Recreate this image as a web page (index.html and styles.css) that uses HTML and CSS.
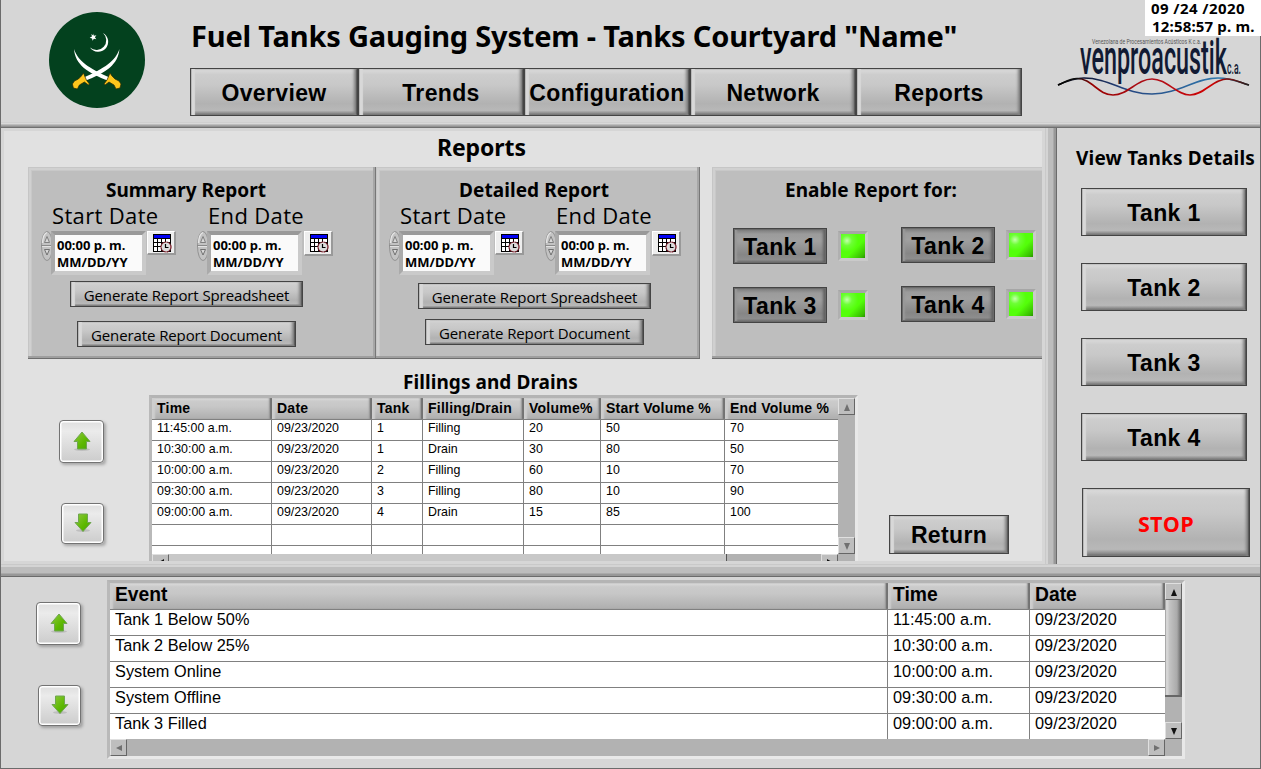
FILE: index.html
```html
<!DOCTYPE html>
<html lang="en">
<head>
<meta charset="utf-8">
<title>Fuel Tanks Gauging System</title>
<link rel="stylesheet" href="styles.css">
</head>
<body>
<svg class="defs" width="0" height="0">
  <defs>
    <linearGradient id="green" x1="0" y1="0" x2="1" y2="1">
      <stop offset="0" stop-color="#8fc93f"/><stop offset=".6" stop-color="#5cb800"/><stop offset="1" stop-color="#4aa010"/>
    </linearGradient>
    <symbol id="up" viewBox="0 0 20 22">
      <ellipse cx="10" cy="18.500" rx="8" ry="1.500" fill="#000" opacity=".12"/>
      <path d="M10 1 L18 10.500 H14.500 V18 H5.500 V10.500 H2 Z" fill="url(#green)" stroke="#6fa650" stroke-width="1"/>
    </symbol>
    <symbol id="down" viewBox="0 0 20 22">
      <ellipse cx="10" cy="17.500" rx="7" ry="1.500" fill="#000" opacity=".12"/>
      <path d="M10 18.500 L18 9.500 H14.500 V1 H5.500 V9.500 H2 Z" fill="url(#green)" stroke="#6fa650" stroke-width="1"/>
    </symbol>
    <symbol id="calendar" viewBox="0 0 19 19">
      <rect width="18" height="18" fill="#000"/>
      <rect x="1" y="1" width="16" height="3" fill="#0000f5"/>
      <g fill="#fff">
        <path d="M1 5h3v3h-3zM5 5h3v3h-3zM9 5h3v3h-3zM13 5h4v3h-4zM1 9h3v3h-3zM5 9h3v3h-3zM9 9h3v3h-3zM13 9h4v3h-4zM1 13h3v4h-3zM5 13h3v4h-3zM9 13h3v4h-3zM13 13h4v4h-4z"/>
      </g>
      <circle cx="13" cy="13" r="5" fill="#dcdcdc" stroke="#7c1522" stroke-width="1.200" stroke-dasharray="2 .6"/>
      <path d="M12.500 10v3.500h3" fill="none" stroke="#000" stroke-width="1.200"/>
    </symbol>
    <symbol id="spin" viewBox="0 0 12 30">
      <ellipse cx="6" cy="15" rx="5.500" ry="14.500" fill="#c3c3c3" stroke="#929292"/>
      <path d="M1.500 12 Q2 3 6 1.500" fill="none" stroke="#e6e6e6" stroke-width="1.300"/>
      <path d="M0 14.500h12" stroke="#8a8a8a"/><path d="M1 15.500h10" stroke="#e2e2e2"/>
      <path d="M6 5.500L3.500 11.500H8.500Z" fill="#d8d8d8" stroke="#777" stroke-width=".9"/>
      <path d="M3.500 18.500H8.500L6 24Z" fill="#d8d8d8" stroke="#666" stroke-width=".9"/>
    </symbol>
    <symbol id="sword" viewBox="0 0 50 44">
      <path d="M1 1 C5 13 15 20 38 30 L36 33 C14 25 2 16 1 1Z" fill="#fff"/>
      <path d="M34 32l3-7 2 3 3 3 4 2 2 3-1 4-4 1-2-4-5-3-4 3-1-1 3-4z" fill="#ffc61c" stroke="#2a2a05" stroke-width=".7"/>
    </symbol>
  </defs>
</svg>

<div class="app">
  <header class="header">
    <svg class="emblem" viewBox="0 0 96 96">
      <circle cx="48" cy="48" r="48" fill="#03411e"/>
      <path d="M54 21 A10 10 0 1 1 41 35.500 A9 9 0 0 0 54 21Z" fill="#fff"/>
      <path d="M44 21.500l1 2.200 2.400-.4-1.500 1.900 1.400 2-2.400-.4-1.400 2-.4-2.400-2.400-.7 2.200-1.200-.5-2.400 1.800 1.500z" fill="#fff"/>
      <use href="#sword" x="24" y="36" width="50" height="44"/>
      <use href="#sword" x="24" y="36" width="50" height="44" transform="translate(95.400 0) scale(-1 1)"/>
    </svg>
    <div class="head-main">
      <h1 class="title">Fuel Tanks Gauging System - Tanks Courtyard "Name"</h1>
      <nav class="nav">
        <button class="btn">Overview</button>
        <button class="btn">Trends</button>
        <button class="btn">Configuration</button>
        <button class="btn">Network</button>
        <button class="btn">Reports</button>
      </nav>
    </div>
    <svg class="brand" viewBox="0 0 196 64">
      <defs>
        <linearGradient id="blueWave"><stop offset="0" stop-color="#000"/><stop offset=".12" stop-color="#0c1230"/><stop offset=".35" stop-color="#26457f"/><stop offset=".85" stop-color="#2f78ad"/><stop offset="1" stop-color="#222"/></linearGradient>
        <linearGradient id="redWave"><stop offset="0" stop-color="#000"/><stop offset=".1" stop-color="#111"/><stop offset=".18" stop-color="#900"/><stop offset=".5" stop-color="#b0101a"/><stop offset=".8" stop-color="#d00000"/><stop offset="1" stop-color="#222"/></linearGradient>
      </defs>
      <text x="35" y="8.500" class="brand-tag" textLength="109" lengthAdjust="spacingAndGlyphs">Venezolana de Procesamientos Acústicos K c.a.</text>
      <text x="23" y="38.500" class="brand-name" textLength="147" lengthAdjust="spacingAndGlyphs">venproacustik</text>
      <text x="170" y="38.500" class="brand-ca" textLength="14" lengthAdjust="spacingAndGlyphs">c.a.</text>
      <path d="M1 50 C12 45 18 43 27 43 C52 43 68 59 95 59 C122 59 138 43 161 43 C176 43 184 48 192 50" fill="none" stroke="url(#blueWave)" stroke-width="1.600"/>
      <path d="M1 50 C10 46 13 43.500 20 43.500 C35 43.500 41 60 56 60 C71 60 80 44 95 44 C110 44 119 60 133 60 C147 60 156 44 170 44 C178 44 184 48 192 50" fill="none" stroke="url(#redWave)" stroke-width="1.600"/>
    </svg>
    <div class="clock"><span class="clock-date">09 /24 /2020</span><span class="clock-time">12:58:57 p. m.</span></div>
  </header>
  <div class="split split-top"></div>

  <div class="middle">
    <main class="reports">
      <h2 class="page-title">Reports</h2>
      <div class="panels">
        <section class="panel summary">
          <h3 class="panel-title">Summary Report</h3>
          <div class="dates">
            <div class="date"><div class="date-label">Start Date</div>
              <div class="date-row"><svg class="spin"><use href="#spin"/></svg><div class="field">00:00 p. m.<br>MM/DD/YY</div><div class="cal"><svg><use href="#calendar"/></svg></div></div></div>
            <div class="date"><div class="date-label">End Date</div>
              <div class="date-row"><svg class="spin"><use href="#spin"/></svg><div class="field">00:00 p. m.<br>MM/DD/YY</div><div class="cal cal-end"><svg><use href="#calendar"/></svg></div></div></div>
          </div>
          <button class="btn gen gen-sheet">Generate Report Spreadsheet</button>
          <button class="btn gen gen-doc">Generate Report Document</button>
        </section>
        <section class="panel detailed">
          <h3 class="panel-title">Detailed Report</h3>
          <div class="dates">
            <div class="date"><div class="date-label">Start Date</div>
              <div class="date-row"><svg class="spin"><use href="#spin"/></svg><div class="field">00:00 p. m.<br>MM/DD/YY</div><div class="cal"><svg><use href="#calendar"/></svg></div></div></div>
            <div class="date"><div class="date-label">End Date</div>
              <div class="date-row"><svg class="spin"><use href="#spin"/></svg><div class="field">00:00 p. m.<br>MM/DD/YY</div><div class="cal cal-end"><svg><use href="#calendar"/></svg></div></div></div>
          </div>
          <button class="btn gen gen-sheet">Generate Report Spreadsheet</button>
          <button class="btn gen gen-doc">Generate Report Document</button>
        </section>
        <section class="panel enable">
          <h3 class="panel-title">Enable Report for:</h3>
          <div class="toggles">
            <div class="toggle-col">
              <div class="toggle"><button class="btn pressed">Tank 1</button><i class="led"></i></div>
              <div class="toggle"><button class="btn pressed">Tank 3</button><i class="led"></i></div>
            </div>
            <div class="toggle-col raised">
              <div class="toggle"><button class="btn pressed">Tank 2</button><i class="led"></i></div>
              <div class="toggle"><button class="btn pressed">Tank 4</button><i class="led"></i></div>
            </div>
          </div>
        </section>
      </div>

      <div class="lower">
        <div class="arrows">
          <button class="arrow"><svg><use href="#up"/></svg></button>
          <button class="arrow arrow-down"><svg><use href="#down"/></svg></button>
        </div>
        <div class="fills">
          <h3 class="fills-title">Fillings and Drains</h3>
          <div class="table small">
            <div class="table-main">
              <div class="grid">
                <b>Time</b><b>Date</b><b>Tank</b><b>Filling/Drain</b><b>Volume%</b><b>Start Volume %</b><b class="last">End Volume %</b>
                <span>11:45:00 a.m.</span><span>09/23/2020</span><span>1</span><span>Filling</span><span>20</span><span>50</span><span>70</span>
                <span>10:30:00 a.m.</span><span>09/23/2020</span><span>1</span><span>Drain</span><span>30</span><span>80</span><span>50</span>
                <span>10:00:00 a.m.</span><span>09/23/2020</span><span>2</span><span>Filling</span><span>60</span><span>10</span><span>70</span>
                <span>09:30:00 a.m.</span><span>09/23/2020</span><span>3</span><span>Filling</span><span>80</span><span>10</span><span>90</span>
                <span>09:00:00 a.m.</span><span>09/23/2020</span><span>4</span><span>Drain</span><span>15</span><span>85</span><span>100</span>
                <span></span><span></span><span></span><span></span><span></span><span></span><span></span>
                <span></span><span></span><span></span><span></span><span></span><span></span><span></span>
              </div>
              <div class="hbar"><i class="sb"><svg viewBox="0 0 8 8"><path d="M7 0v7L1 3.500z"/></svg></i><i class="hthumb"></i><i class="sb right"><svg viewBox="0 0 8 8"><path d="M1 0v7L7 3.500z"/></svg></i></div>
            </div>
            <div class="vbar dim"><i class="sb"><svg viewBox="0 0 8 8"><path d="M4 1L7 8H1z"/></svg></i><i class="sb"><svg viewBox="0 0 8 8"><path d="M4 8L7 1H1z"/></svg></i></div>
          </div>
        </div>
        <button class="btn return">Return</button>
      </div>
    </main>
    <div class="vsplit"></div>
    <aside class="side">
      <h3 class="side-title">View Tanks Details</h3>
      <button class="btn">Tank 1</button>
      <button class="btn">Tank 2</button>
      <button class="btn">Tank 3</button>
      <button class="btn">Tank 4</button>
      <button class="btn stop">STOP</button>
    </aside>
  </div>
  <div class="split split-bottom"></div>

  <footer class="events">
    <div class="arrows">
      <button class="arrow"><svg><use href="#up"/></svg></button>
      <button class="arrow arrow-down"><svg><use href="#down"/></svg></button>
    </div>
    <div class="table large">
      <div class="table-main">
        <div class="grid">
          <b>Event</b><b>Time</b><b>Date</b>
          <span>Tank 1 Below 50%</span><span>11:45:00 a.m.</span><span>09/23/2020</span>
          <span>Tank 2 Below 25%</span><span>10:30:00 a.m.</span><span>09/23/2020</span>
          <span>System Online</span><span>10:00:00 a.m.</span><span>09/23/2020</span>
          <span>System Offline</span><span>09:30:00 a.m.</span><span>09/23/2020</span>
          <span>Tank 3 Filled</span><span>09:00:00 a.m.</span><span>09/23/2020</span>
        </div>
        <div class="hbar dim"><i class="sb"><svg viewBox="0 0 8 8"><path d="M7 1v6L1 4z"/></svg></i><i class="sb right"><svg viewBox="0 0 8 8"><path d="M1 1v6L7 4z"/></svg></i></div>
      </div>
      <div class="vbar"><i class="sb"><svg viewBox="0 0 8 8"><path d="M4 1L7 8H1z"/></svg></i><i class="vthumb"></i><i class="sb"><svg viewBox="0 0 8 8"><path d="M4 8L7 1H1z"/></svg></i></div>
    </div>
  </footer>
</div>
</body>
</html>
```
FILE: styles.css
```css
* { box-sizing: border-box; }
body { margin: 0; font-family: "Liberation Sans", Arial, sans-serif; color: #000; overflow: hidden; }
h1, h2, h3 { margin: 0; font-family: "Noto Sans", "Open Sans", sans-serif; font-weight: 700; white-space: nowrap; }
.defs { position: absolute; }
i { display: block; }
svg { display: block; }
button { padding: 0; margin: 0; white-space: nowrap; }

.app { width: 1261px; height: 769px; display: flex; flex-direction: column; background: #d6d6d6; border: solid #6b6b6b; border-width: 0 1px 1px 1px; position: relative; }

/* bevelled buttons */
.btn {
  display: block; flex: none; border: 1px solid #444; color: #000; padding-top: 2px;
  font: 700 23px/1 "Liberation Sans", Arial, sans-serif; letter-spacing: .35px;
  background: linear-gradient(#dcdcdc 0, #cdcdcd 12%, #c8c8c8 35%, #b2b2b2 75%, #b8b8b8 90%, #8d8d8d 96%, #666 100%);
  box-shadow: inset 1px 0 #b9b9b9, inset 4px 0 1px #d8d8d8, inset -1px 0 1px #585858, inset -4px 0 3px -1px #808080;
}

/* header */
.header { height: 122px; flex: none; display: flex; }
.emblem { width: 96px; height: 96px; margin: 12px 0 0 48px; flex: none; }
.head-main { width: 832px; margin: 0 0 0 45px; flex: none; }
.title { font-size: 29px; line-height: 40px; height: 68px; padding: 16px 0 0 1px; letter-spacing: -.19px; }
.nav { display: flex; height: 48px; }
.nav .btn { width: 166px; height: 48px; }
.nav .btn:first-child { width: 168px; }
.brand { width: 196px; height: 64px; margin: 35px 0 0 35px; flex: none; overflow: visible; }
.brand-tag { font: 7px "Roboto", sans-serif; fill: #555; }
.brand-name { font: 500 48px "Roboto", sans-serif; fill: #111a33; }
.brand-ca { font: 500 18px "Roboto", sans-serif; fill: #111a33; }
.clock { position: absolute; top: 0; right: -1px; width: 116px; height: 36px; background: #fff; display: flex; flex-direction: column; font: 700 15px/18px "Noto Sans", sans-serif; white-space: nowrap; }
.clock-date { padding-left: 6px; letter-spacing: .42px; margin-top: -1px; }
.clock-time { padding-left: 7px; letter-spacing: .17px; }

/* splitters */
.split { flex: none; }
.split-top { height: 6px; background: linear-gradient(#cfcfcf 0 1px, #d9d9d9 1px 2px, #bdbdbd 2px 3px, #a5a5a5 3px 4px, #929292 4px 5px, #707070 5px); }
.split-bottom { height: 13px; background: linear-gradient(#c9c9c9 0 1px, #d4d4d4 1px 3px, #bdbdbd 3px 9px, #aaa 9px 10px, #989898 10px 12px, #6b6b6b 12px); }
.vsplit { width: 12px; flex: none; margin-left: 3px; background: linear-gradient(90deg, #c9c9c9 0 1px, #d4d4d4 1px 3px, #bdbdbd 3px 8px, #aaa 8px 9px, #989898 9px 11px, #6b6b6b 11px); }
.middle { display: flex; height: 436px; flex: none; }

/* reports page */
.reports { width: 1038px; height: 430px; margin: 3px 0 0 3px; background: #e1e1e1; overflow: hidden; flex: none; }
.page-title { font-size: 23px; line-height: 32px; height: 36px; padding-left: 433px; letter-spacing: -.1px; }
.panels { display: flex; height: 192px; padding-left: 24px; }
.panel { height: 192px; flex: none; background: #bebebe; padding: 4px 3px 3px 4px; box-shadow: inset 0 -1px #6e6e6e, inset -1px 0 #777, inset 0 -3px #9f9f9f, inset -3px 0 #a6a6a6, inset 1px 1px #c6c6c6, inset 3px 0 #d0d0d0, inset 0 3px #d0d0d0, inset 4px 4px #c8c8c8; }
.panel-title { font-size: 19px; line-height: 26px; height: 32px; padding-top: 6px; }
.summary { width: 348px; }
.summary .panel-title { padding-left: 74px; }
.detailed { width: 324px; }
.detailed .panel-title { padding-left: 79px; letter-spacing: .07px; }
.enable { width: 334px; margin-left: 12px; }
.enable .panel-title { padding-left: 69px; letter-spacing: .06px; }
.dates { display: flex; height: 78px; padding: 0 0 0 9px; }
.date { width: 156px; flex: none; }
.date-label { font: 22px/24px "Open Sans", "Noto Sans", sans-serif; padding-left: 11px; height: 28px; letter-spacing: .35px; white-space: nowrap; }
.date-row { display: flex; align-items: flex-start; }
.spin { width: 12px; height: 30px; flex: none; }
.field { width: 95px; height: 44px; margin-left: -2px; flex: none; background: #fafafa; border: 4px solid; border-color: #999 #cacaca #cacaca #aaa; font: 700 13px/17px "Noto Sans", sans-serif; padding: 2px 0 0 2px; white-space: nowrap; }
.cal { width: 29px; height: 24px; margin-left: 1px; flex: none; background: #eee; border: solid; border-width: 1px 2px 2px 1px; border-color: #fff #999 #999 #fff; padding: 2px 0 0 5px; }
.cal-end { height: 25px; margin-left: 2px; }
.cal svg { width: 19px; height: 19px; }
.gen { font: 15px/22px "Open Sans", sans-serif; height: 26px; letter-spacing: -.1px; padding-top: 1px; }
.gen-sheet { width: 233px; margin-left: 38px; }
.gen-doc { width: 219px; margin: 14px 0 0 45px; }
.detailed .gen-sheet { margin-top: 2px; }
.detailed .gen-doc { margin-top: 10px; }

.toggles { display: flex; gap: 33px; padding: 25px 0 0 17px; }
.toggle-col { display: flex; flex-direction: column; gap: 23px; }
.toggle-col.raised { margin-top: -1px; }
.toggle { display: flex; align-items: flex-start; gap: 11px; }
.pressed { width: 94px; height: 36px; background: linear-gradient(#777, #9b9b9b 15%, #a0a0a0 35%, #868686 75%, #8d8d8d 90%, #666); border-width: 1px; box-shadow: inset 0 0 0 1px #6a6a6a, inset 4px 0 2px -1px #999, inset -4px 0 3px -1px #606060; }
.led { width: 30px; height: 30px; margin-top: 3px; border: 3px solid; border-color: #a6a6a6 #cacaca #cacaca #b0b0b0; background: radial-gradient(circle at 25% 28%, #c4ffac 0, #6dff35 20%, transparent 45%), linear-gradient(135deg, #54ff0a 0 60%, #38bd00 90%, #299000); }

/* fillings table area */
.lower { display: flex; height: 202px; }
.arrows { flex: none; }
.lower .arrows { width: 145px; padding: 61px 0 0 55px; }
.arrow { display: flex; justify-content: center; align-items: center; width: 45px; height: 43px; border: 1px solid #737373; border-radius: 4px; background: linear-gradient(#dedede, #ebebeb 25%, #ccc); box-shadow: inset 0 0 0 1.5px #fff, 2px 2px 3px rgba(0,0,0,.25); }
.arrow svg { width: 20px; height: 22px; }
.arrow-down { width: 43px; height: 41px; margin: 40px 0 0 2px; }
.fills { width: 709px; flex: none; }
.fills-title { font-size: 19px; line-height: 26px; height: 36px; padding: 10px 0 0 254px; letter-spacing: .06px; }
.return { width: 120px; height: 39px; margin: 156px 0 0 31px; }

.table { display: flex; border: 3px solid; border-color: #b4b4b4 #e8e8e8 #e8e8e8 #b9b9b9; }
.table-main { flex: none; }
.grid { display: grid; background: #fff; overflow: hidden; }
.grid span, .grid b { white-space: nowrap; border-right: 1px solid #808080; border-bottom: 1px solid #808080; overflow: hidden; }
.grid b { border-right: 0; background: linear-gradient(#dcdcdc, #cbcbcb 15%, #c7c7c7 40%, #aeaeae); box-shadow: inset 4px 0 2px -1px #cecece, inset -2px 0 1px #727272, inset -4px 0 2px -1px #999; }
.small { width: 709px; height: 172px; }
.small .grid { grid-template-columns: 120px 100px 51px 101px 77px 124px 113px; grid-template-rows: 22px repeat(7, 21px); height: 156px; }
.small .grid span { font-size: 12.4px; line-height: 15px; padding: 1px 0 0 5px; }
.small .grid b { font-size: 14px; line-height: 20px; padding-left: 5px; letter-spacing: .24px; }
.small .grid b.last { box-shadow: inset 4px 0 2px -1px #cecece; }
.small .grid span:nth-child(7n) { border-right: 0; }
.large { width: 1078px; height: 179px; flex: none; }
.large .grid { grid-template-columns: 778px 142px 135px; grid-template-rows: 27px repeat(5, 26px); height: 156px; }
.large .grid span { font-size: 16.3px; line-height: 18px; padding-left: 5px; letter-spacing: .03px; }
.large .grid b { font-size: 19.300px; line-height: 24px; padding-left: 5px; }
.large .grid span:nth-child(3n) { border-right: 0; }

/* scrollbars */
.sb { width: 17px; height: 17px; flex: none; display: flex; align-items: center; justify-content: center; background: #bebebe; border: 1px solid; border-color: #e0e0e0 #666 #666 #e0e0e0; }
.sb svg { width: 8px; height: 8px; fill: #111; }
.dim .sb svg { fill: #707070; }
.hbar { display: flex; height: 17px; background: #b2b2b2; }
.sb.right { margin-left: auto; }
.hthumb { width: 558px; background: #c8c8c8; border-right: 1px solid #555; }
.vbar { width: 17px; flex: none; background: #b2b2b2; display: flex; flex-direction: column; }
.vbar .sb:last-child { margin-top: auto; }
.small .vbar { height: 173px; padding-bottom: 17px; }
.large .vbar { padding-bottom: 17px; }
.vthumb { height: 97px; background: linear-gradient(90deg, #aaa 0 1px, #d5d5d5 1px 3px, #c5c5c5 4px, #aaa 12px, #777 15px, #555); border-bottom: 2px solid #666; }

/* side column */
.side { flex: none; width: 202px; padding-left: 24px; }
.side-title { font-size: 19px; line-height: 26px; height: 60px; padding-top: 17px; margin-left: -5px; letter-spacing: .2px; }
.side .btn { width: 166px; height: 48px; margin-bottom: 27px; }
.side .stop { width: 168px; height: 69px; margin-left: 1px; color: #f00; font: 700 21.500px/1 "Open Sans", sans-serif; letter-spacing: .3px; padding-top: 3px; }

/* events */
.events { display: flex; flex: 1; }
.events .arrows { width: 106px; padding: 25px 0 0 35px; }
.events .table { margin-top: 3px; }
```
